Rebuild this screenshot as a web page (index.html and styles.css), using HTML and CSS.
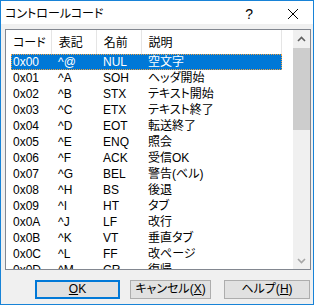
FILE: index.html
```html
<!DOCTYPE html>
<html lang="ja">
<head>
<meta charset="utf-8">
<link rel="stylesheet" href="styles.css">
</head>
<body>
<div class="window">
  <div class="titlebar">
    <span class="title">コントロールコード</span>
    <span class="help-q">?</span>
    <svg class="close" width="12" height="12" viewBox="0 0 12 12"><path d="M1 1 L11 11 M11 1 L1 11" stroke="#000" stroke-width="1" fill="none"/></svg>
  </div>
  <div class="content">
    <div class="listbox">
      <div class="listarea">
        <div class="header">
          <div class="hcell c1">コード</div>
          <div class="hcell c2">表記</div>
          <div class="hcell c3">名前</div>
          <div class="hcell c4">説明</div>
        </div>
        <div class="rows">
          <div class="row selected"><span class="cell c1">0x00</span><span class="cell c2">^@</span><span class="cell c3">NUL</span><span class="cell c4">空文字</span></div>
          <div class="row"><span class="cell c1">0x01</span><span class="cell c2">^A</span><span class="cell c3">SOH</span><span class="cell c4">ヘッダ開始</span></div>
          <div class="row"><span class="cell c1">0x02</span><span class="cell c2">^B</span><span class="cell c3">STX</span><span class="cell c4">テキスト開始</span></div>
          <div class="row"><span class="cell c1">0x03</span><span class="cell c2">^C</span><span class="cell c3">ETX</span><span class="cell c4">テキスト終了</span></div>
          <div class="row"><span class="cell c1">0x04</span><span class="cell c2">^D</span><span class="cell c3">EOT</span><span class="cell c4">転送終了</span></div>
          <div class="row"><span class="cell c1">0x05</span><span class="cell c2">^E</span><span class="cell c3">ENQ</span><span class="cell c4">照会</span></div>
          <div class="row"><span class="cell c1">0x06</span><span class="cell c2">^F</span><span class="cell c3">ACK</span><span class="cell c4">受信OK</span></div>
          <div class="row"><span class="cell c1">0x07</span><span class="cell c2">^G</span><span class="cell c3">BEL</span><span class="cell c4">警告(ベル)</span></div>
          <div class="row"><span class="cell c1">0x08</span><span class="cell c2">^H</span><span class="cell c3">BS</span><span class="cell c4">後退</span></div>
          <div class="row"><span class="cell c1">0x09</span><span class="cell c2">^I</span><span class="cell c3">HT</span><span class="cell c4">タブ</span></div>
          <div class="row"><span class="cell c1">0x0A</span><span class="cell c2">^J</span><span class="cell c3">LF</span><span class="cell c4">改行</span></div>
          <div class="row"><span class="cell c1">0x0B</span><span class="cell c2">^K</span><span class="cell c3">VT</span><span class="cell c4">垂直タブ</span></div>
          <div class="row"><span class="cell c1">0x0C</span><span class="cell c2">^L</span><span class="cell c3">FF</span><span class="cell c4">改ページ</span></div>
          <div class="row"><span class="cell c1">0x0D</span><span class="cell c2">^M</span><span class="cell c3">CR</span><span class="cell c4">復帰</span></div>
        </div>
      </div>
      <div class="scrollbar">
        <div class="sb-btn"><svg width="9" height="6" viewBox="0 0 9 6"><path d="M1 5 L4.5 1.5 L8 5" stroke="#606060" stroke-width="1.6" fill="none"/></svg></div>
        <div class="sb-thumb"></div>
        <div class="sb-track"></div>
        <div class="sb-btn"><svg width="9" height="6" viewBox="0 0 9 6"><path d="M1 1 L4.5 4.5 L8 1" stroke="#a6a6a6" stroke-width="1.6" fill="none"/></svg></div>
      </div>
    </div>
    <div class="buttons">
      <button class="btn ok"><u>O</u>K</button>
      <button class="btn cancel">キャンセル(<u>X</u>)</button>
      <button class="btn help">ヘルプ(<u>H</u>)</button>
    </div>
  </div>
</div>
</body>
</html>
```
FILE: styles.css
```css
* { box-sizing: border-box; }
html, body { margin: 0; padding: 0; background: #ffffff; }
body {
  font-family: "Liberation Sans", "Noto Sans CJK JP", sans-serif;
  font-size: 12px;
  color: #000;
  font-feature-settings: "palt";
}
.window {
  width: 314px;
  height: 305px;
  border: 1px solid #1883d7;
  display: flex;
  flex-direction: column;
  background: #f0f0f0;
}
.titlebar {
  height: 23px;
  background: #ffffff;
  display: flex;
  align-items: center;
  padding-left: 4px;
  flex: none;
}
.title {
  font-family: "Noto Sans CJK JP", sans-serif;
  font-size: 12px;
  line-height: 14px;
  margin-top: 1px;
}
.help-q {
  margin-left: auto;
  font-family: "Liberation Sans", sans-serif;
  font-size: 14px;
  line-height: 14px;
  margin-top: 2px;
}
.close {
  margin-left: 34px;
  margin-right: 14px;
  margin-top: 2px;
}
.content {
  flex: 1;
  padding: 5px 2px 0 4px;
  display: flex;
  flex-direction: column;
}
.listbox {
  width: 306px;
  height: 241px;
  border: 1px solid #828790;
  background: #ffffff;
  display: flex;
  overflow: hidden;
}
.listarea {
  flex: 1;
  overflow: hidden;
}
.header {
  display: flex;
  height: 24px;
  width: 276px;
}
.hcell {
  height: 24px;
  line-height: 24px;
  padding-left: 7px;
  border-right: 1px solid #e5e5e5;
  font-family: "Noto Sans CJK JP", sans-serif;
}
.hcell.c1 { width: 46px; }
.hcell.c2 { width: 45px; }
.hcell.c3 { width: 45px; }
.hcell.c4 { width: 141px; }
.rows { display: flex; flex-direction: column; }
.row {
  display: flex;
  height: 16px;
  line-height: 16px;
  margin-left: 5px;
  width: 271px;
  flex: none;
  white-space: nowrap;
}
.row.selected {
  background: #0078d7;
  color: #ffffff;
  outline: 1px dotted #f0a040;
  outline-offset: -1px;
}
.cell { display: block; overflow: hidden; }
.cell.c1 { width: 40px; padding-left: 2px; }
.cell.c2 { width: 45px; padding-left: 7px; }
.cell.c3 { width: 45px; padding-left: 7px; }
.cell.c4 { flex: 1; padding-left: 7px; }
.scrollbar {
  width: 17px;
  flex: none;
  background: #f0f0f0;
  display: flex;
  flex-direction: column;
}
.sb-btn {
  height: 17px;
  display: flex;
  align-items: center;
  justify-content: center;
  flex: none;
}
.sb-thumb {
  height: 82px;
  margin: 1px 0;
  background: #cdcdcd;
  flex: none;
}
.sb-track { flex: 1; }
.buttons {
  display: flex;
  margin-top: 10px;
}
.btn {
  height: 19px;
  padding: 0;
  background: #e1e1e1;
  border: 1px solid #adadad;
  font-family: "Liberation Sans", "Noto Sans CJK JP", sans-serif;
  font-size: 12px;
  color: #000;
  line-height: 15px;
  font-feature-settings: "palt";
}
.btn.ok {
  width: 85px;
  margin-left: 30px;
  border: 2px solid #0078d7;
}
.btn.cancel { width: 81px; margin-left: 10px; }
.btn.help { width: 86px; margin-left: 13px; }
```
